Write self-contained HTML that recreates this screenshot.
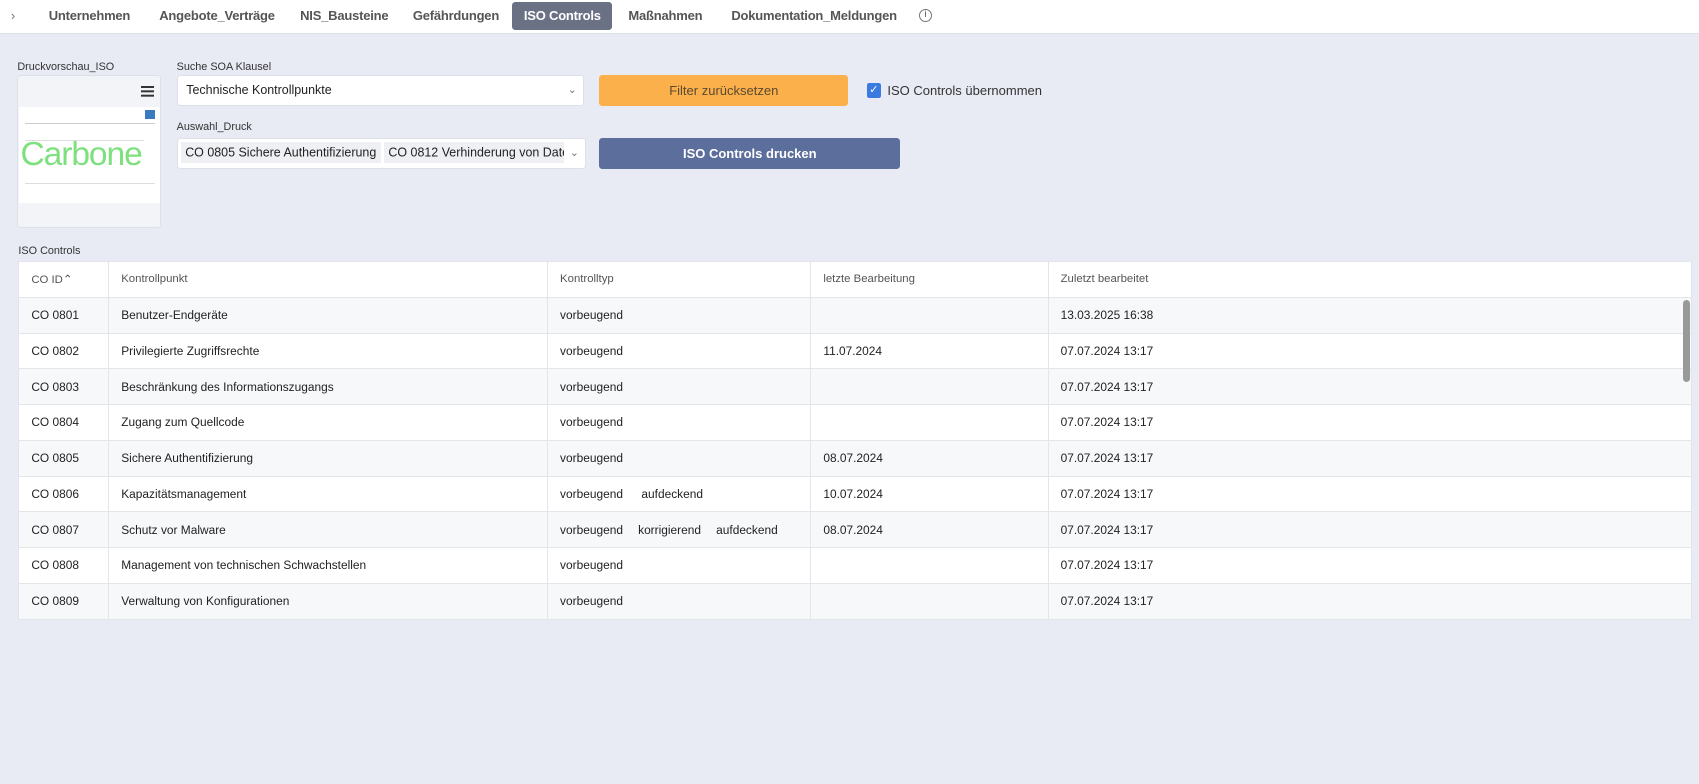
<!DOCTYPE html>
<html><head><meta charset="utf-8"><style>
*{box-sizing:border-box;margin:0;padding:0}
html,body{width:1699px;height:784px;overflow:hidden}
body{background:#e8ebf4;font-family:"Liberation Sans",sans-serif;color:#333}
#w{position:relative;width:1568px;height:724px;zoom:1.0835}
.top{position:absolute;left:0;top:0;width:1568px;height:31px;background:#fff;border-bottom:1px solid #dde0e8}
.tab{position:absolute;top:2px;height:26px;line-height:26px;font-size:12px;color:#555;font-weight:bold;letter-spacing:-0.2px}
.tab.act{background:#6b7185;color:#fff;border-radius:3px;padding:0 12px}
.lbl{position:absolute;font-size:10px;color:#333}
.box{position:absolute;background:#fff;border:1px solid #dde0e8;border-radius:3px}
.sel{font-size:11.5px;line-height:27px;padding-left:8px;color:#222;white-space:nowrap;overflow:hidden}
.chev{position:absolute;right:0;top:0;width:20px;text-align:center;font-size:10px;color:#777;background:#fff}
table{position:absolute;left:17px;top:241px;width:1545px;border-collapse:collapse;background:#fff;font-size:11px;color:#222}
td,th{border:1px solid #e3e5ea;height:33px;padding-left:11px;text-align:left;font-weight:normal;white-space:nowrap;vertical-align:middle}
th{color:#555;font-size:10.5px;height:33px}
tr:nth-child(even) td{background:#f7f8fa}
.tg{margin-right:14px}
</style></head><body><div id="w">
<div class="top">
<div class="tab" style="left:10px;color:#777;font-weight:normal">&#x203A;</div>
<div class="tab" style="left:45px">Unternehmen</div>
<div class="tab" style="left:147px">Angebote_Verträge</div>
<div class="tab" style="left:277px">NIS_Bausteine</div>
<div class="tab" style="left:381px">Gefährdungen</div>
<div class="tab act" style="left:473px;width:92px;text-align:center;padding:0">ISO Controls</div>
<div class="tab" style="left:580px">Maßnahmen</div>
<div class="tab" style="left:675px">Dokumentation_Meldungen</div>
<div class="tab" style="left:848px;width:12px;height:12px;top:8px;border:1px solid #777;border-radius:50%;font-size:9px;line-height:10px;text-align:center;font-weight:normal">i</div>
</div>
<div class="lbl" style="left:16px;top:56px">Druckvorschau_ISO</div>
<div class="box" style="left:16px;top:69px;width:133px;height:141px;background:#f3f4f7">
<div style="position:absolute;right:6px;top:9px;width:12px;height:2px;background:#333;box-shadow:0 4px 0 #333,0 8px 0 #333"></div>
<div style="position:absolute;left:1px;top:29px;width:130px;height:88px;background:#fff">
<div style="position:absolute;right:5px;top:3px;width:9px;height:8px;background:#3a7bbf"></div>
<div style="position:absolute;left:5px;top:15px;width:120px;height:1px;background:#ccc"></div>
<div style="position:absolute;left:5px;top:30px;width:110px;height:1px;background:#ddd"></div>
<div style="position:absolute;left:5px;top:70px;width:120px;height:1px;background:#ddd"></div>
<div style="position:absolute;left:1px;top:27px;font-size:31px;color:#7ee07e;letter-spacing:-1px">Carbone</div>
</div></div>
<div class="lbl" style="left:163px;top:56px">Suche SOA Klausel</div>
<div class="box sel" style="left:163px;top:69px;width:376px;height:29px">Technische Kontrollpunkte<span class="chev">&#x2304;</span></div>
<div class="lbl" style="left:163px;top:112px">Auswahl_Druck</div>
<div class="box sel" style="left:163px;top:127px;width:378px;height:29px;padding-left:3px">
<span style="background:#eef0f3;padding:3px 4px">CO 0805 Sichere Authentifizierung</span>
<span style="background:#eef0f3;padding:3px 4px">CO 0812 Verhinderung von Daten</span><span class="chev">&#x2304;</span></div>
<div style="position:absolute;left:553px;top:69px;width:230px;height:29px;background:#fbb04b;border-radius:3px;color:#5a4a30;font-size:12px;text-align:center;line-height:29px">Filter zurücksetzen</div>
<div style="position:absolute;left:800px;top:77px;width:13px;height:13px;background:#3b7be0;border-radius:2px;color:#fff;font-size:10px;text-align:center;line-height:13px">&#x2713;</div>
<div style="position:absolute;left:819px;top:77px;font-size:12px">ISO Controls übernommen</div>
<div style="position:absolute;left:553px;top:127px;width:278px;height:29px;background:#5c6e9c;border-radius:3px;color:#fff;font-weight:bold;font-size:12px;text-align:center;line-height:29px">ISO Controls drucken</div>
<div class="lbl" style="left:17px;top:226px">ISO Controls</div>
<table>
<tr><th style="width:83px">CO ID&#x2303;</th><th style="width:405px">Kontrollpunkt</th><th style="width:243px">Kontrolltyp</th><th style="width:219px">letzte Bearbeitung</th><th>Zuletzt bearbeitet</th></tr>
<tr><td>CO 0801</td><td>Benutzer-Endgeräte</td><td>vorbeugend</td><td></td><td>13.03.2025 16:38</td></tr>
<tr><td>CO 0802</td><td>Privilegierte Zugriffsrechte</td><td>vorbeugend</td><td>11.07.2024</td><td>07.07.2024 13:17</td></tr>
<tr><td>CO 0803</td><td>Beschränkung des Informationszugangs</td><td>vorbeugend</td><td></td><td>07.07.2024 13:17</td></tr>
<tr><td>CO 0804</td><td>Zugang zum Quellcode</td><td>vorbeugend</td><td></td><td>07.07.2024 13:17</td></tr>
<tr><td>CO 0805</td><td>Sichere Authentifizierung</td><td>vorbeugend</td><td>08.07.2024</td><td>07.07.2024 13:17</td></tr>
<tr><td>CO 0806</td><td>Kapazitätsmanagement</td><td><span class="tg">vorbeugend</span> aufdeckend</td><td>10.07.2024</td><td>07.07.2024 13:17</td></tr>
<tr><td>CO 0807</td><td>Schutz vor Malware</td><td><span class="tg">vorbeugend</span><span class="tg">korrigierend</span>aufdeckend</td><td>08.07.2024</td><td>07.07.2024 13:17</td></tr>
<tr><td>CO 0808</td><td>Management von technischen Schwachstellen</td><td>vorbeugend</td><td></td><td>07.07.2024 13:17</td></tr>
<tr><td>CO 0809</td><td>Verwaltung von Konfigurationen</td><td>vorbeugend</td><td></td><td>07.07.2024 13:17</td></tr>
</table>
<div style="position:absolute;left:1553px;top:277px;width:7px;height:76px;background:#999;border-radius:4px"></div>
</div></body></html>
